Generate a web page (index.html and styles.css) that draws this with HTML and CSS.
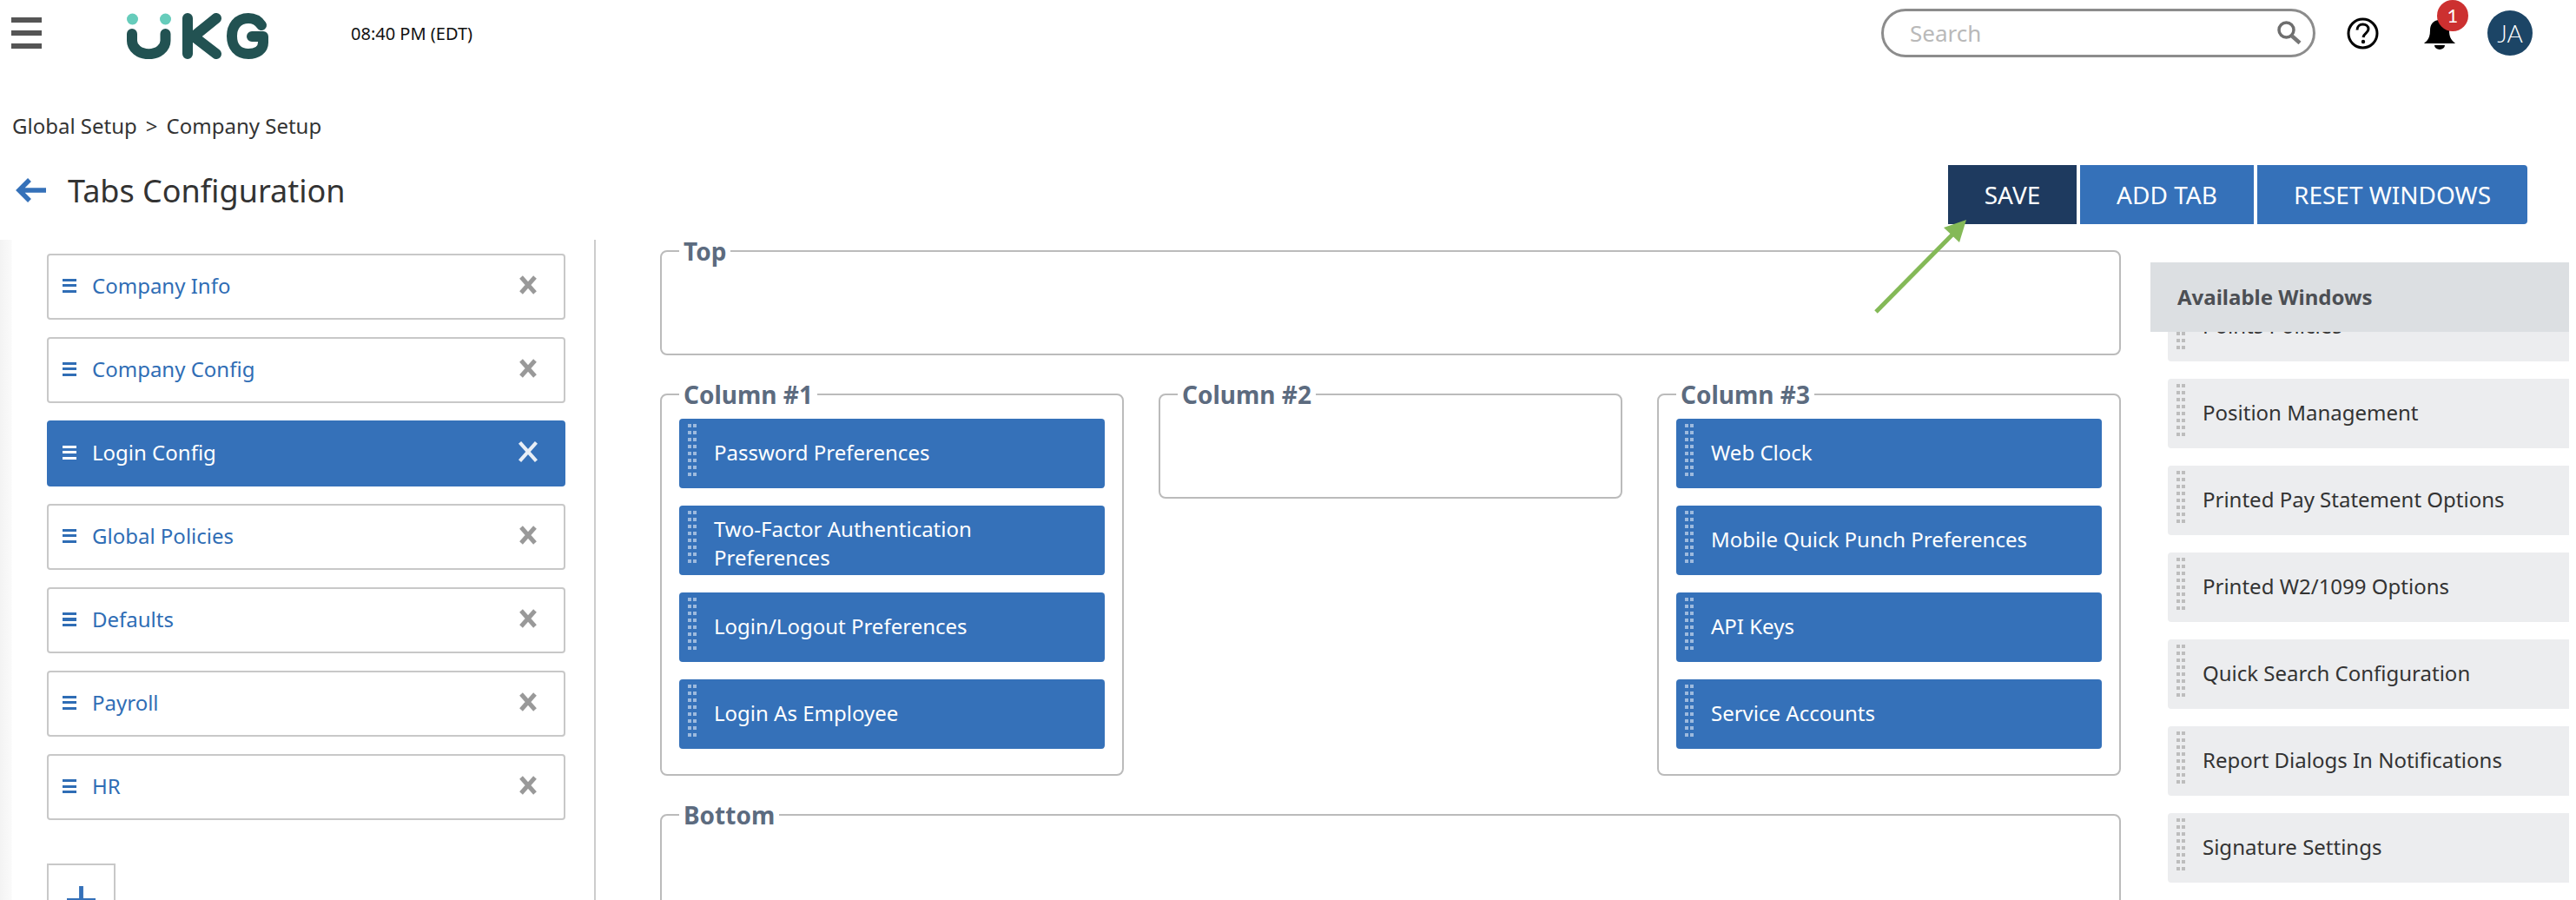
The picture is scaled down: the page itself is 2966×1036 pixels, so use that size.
FILE: index.html
```html
<!DOCTYPE html>
<html lang="en">
<head>
<meta charset="utf-8">
<title>Tabs Configuration</title>
<link rel="stylesheet" href="styles.css">
</head>
<body>
<div class="page">
  <header class="topbar">
    <svg class="menu" viewBox="0 0 35 36" aria-hidden="true"><path d="M0 0h35v6H0zM0 15h35v6H0zM0 30h35v6H0z"/></svg>
    <svg class="logo" viewBox="0 0 164 53" aria-hidden="true">
      <g fill="#66ccbb"><ellipse cx="6.500" cy="7" rx="6.500" ry="6.500"/><ellipse cx="44.500" cy="7" rx="6.500" ry="6.500"/></g>
      <g fill="none" stroke="#225252" stroke-width="12" stroke-linecap="round" stroke-linejoin="round">
        <path d="M6 24v8a19 15 0 0 0 38.500 0v-8"/>
        <path d="M70 6v41M103 6 L77 27 L103 47"/>
        <path d="M155 14c-4-6-10-8-15-8c-13 0-19 10-19 20.500c0 12 7 20.500 19 20.500c10 0 17-5 17-13v-7h-13"/>
      </g>
    </svg>
    <span class="clock">08:40 PM (EDT)</span>
    <div class="search">
      <span class="search-text">Search</span>
      <svg class="search-icon" viewBox="0 0 28 27" aria-hidden="true"><circle cx="10.500" cy="10.500" r="8.500" fill="none" stroke="#6e6e6e" stroke-width="3.500"/><path d="M16.500 17 26 25.500" stroke="#777" stroke-width="4.500"/></svg>
    </div>
    <svg class="help" viewBox="0 0 37 37" aria-hidden="true"><circle cx="18.500" cy="18.500" r="16.500" fill="none" stroke="#000" stroke-width="3"/><path d="M12 14.500c0-4 3-6.500 6.500-6.500c3.500 0 6.500 2 6.500 5.500c0 4.500-5.500 4.500-6 9.500" fill="none" stroke="#000" stroke-width="3"/><circle cx="19" cy="28" r="2.200"/></svg>
    <div class="bell-wrap">
      <svg class="bell" viewBox="0 0 36 34" aria-hidden="true"><path d="M18 0C10 0 7 6 7 12c0 7-2 11-6 14l-1 1h36l-1-1c-4-3-6-7-6-14C29 6 26 0 18 0z"/><path d="M12 29h12a6 5 0 0 1-12 0z"/></svg>
      <span class="badge">1</span>
    </div>
    <span class="avatar">JA</span>
  </header>

  <nav class="crumbs"><span>Global Setup</span><span class="sep">&gt;</span><span>Company Setup</span></nav>

  <div class="titlebar">
    <svg class="back" viewBox="0 0 36 28" aria-hidden="true"><path d="M35 14H5M16 2 4 14l12 12" fill="none" stroke="#3571b9" stroke-width="5.500"/></svg>
    <h1>Tabs Configuration</h1>
    <div class="actions">
      <button class="btn btn-dark">SAVE</button>
      <button class="btn btn-add">ADD TAB</button>
      <button class="btn btn-reset">RESET WINDOWS</button>
    </div>
  </div>

  <main class="workspace">
    <aside class="tabs">
      <div class="tab"><span class="bars"></span><span class="tab-name">Company Info</span><svg class="close" viewBox="0 0 22 22" aria-hidden="true"><path d="M3 2l16 18M19 2 3 20"/></svg></div>
      <div class="tab"><span class="bars"></span><span class="tab-name">Company Config</span><svg class="close" viewBox="0 0 22 22" aria-hidden="true"><path d="M3 2l16 18M19 2 3 20"/></svg></div>
      <div class="tab tab-active"><span class="bars"></span><span class="tab-name">Login Config</span><svg class="close" viewBox="0 0 22 22" aria-hidden="true"><path d="M3 2l16 18M19 2 3 20"/></svg></div>
      <div class="tab"><span class="bars"></span><span class="tab-name">Global Policies</span><svg class="close" viewBox="0 0 22 22" aria-hidden="true"><path d="M3 2l16 18M19 2 3 20"/></svg></div>
      <div class="tab"><span class="bars"></span><span class="tab-name">Defaults</span><svg class="close" viewBox="0 0 22 22" aria-hidden="true"><path d="M3 2l16 18M19 2 3 20"/></svg></div>
      <div class="tab"><span class="bars"></span><span class="tab-name">Payroll</span><svg class="close" viewBox="0 0 22 22" aria-hidden="true"><path d="M3 2l16 18M19 2 3 20"/></svg></div>
      <div class="tab"><span class="bars"></span><span class="tab-name">HR</span><svg class="close" viewBox="0 0 22 22" aria-hidden="true"><path d="M3 2l16 18M19 2 3 20"/></svg></div>
      <div class="add-tab"><svg viewBox="0 0 34 34" aria-hidden="true"><path d="M17 0v34M0 17h34" stroke="#3571b9" stroke-width="5"/></svg></div>
    </aside>

    <section class="layout">
      <fieldset class="zone"><legend>Top</legend></fieldset>
      <div class="columns">
        <fieldset class="zone">
          <legend>Column #1</legend>
          <div class="stack">
            <div class="win"><span class="grip"></span><span>Password Preferences</span></div>
            <div class="win win-two"><span class="grip"></span><span>Two-Factor Authentication Preferences</span></div>
            <div class="win"><span class="grip"></span><span>Login/Logout Preferences</span></div>
            <div class="win"><span class="grip"></span><span>Login As Employee</span></div>
          </div>
        </fieldset>
        <fieldset class="zone"><legend>Column #2</legend></fieldset>
        <fieldset class="zone">
          <legend>Column #3</legend>
          <div class="stack">
            <div class="win"><span class="grip"></span><span>Web Clock</span></div>
            <div class="win"><span class="grip"></span><span>Mobile Quick Punch Preferences</span></div>
            <div class="win"><span class="grip"></span><span>API Keys</span></div>
            <div class="win"><span class="grip"></span><span>Service Accounts</span></div>
          </div>
        </fieldset>
      </div>
      <fieldset class="zone zone-tall"><legend>Bottom</legend></fieldset>
    </section>

    <aside class="available">
      <h2>Available Windows</h2>
      <div class="avail-view">
        <div class="avail-list">
          <div class="win win-free"><span class="grip"></span><span>Points Policies</span></div>
          <div class="win win-free"><span class="grip"></span><span>Position Management</span></div>
          <div class="win win-free"><span class="grip"></span><span>Printed Pay Statement Options</span></div>
          <div class="win win-free"><span class="grip"></span><span>Printed W2/1099 Options</span></div>
          <div class="win win-free"><span class="grip"></span><span>Quick Search Configuration</span></div>
          <div class="win win-free"><span class="grip"></span><span>Report Dialogs In Notifications</span></div>
          <div class="win win-free"><span class="grip"></span><span>Signature Settings</span></div>
        </div>
      </div>
    </aside>
  </main>

  <svg class="pointer" viewBox="0 0 120 120" aria-hidden="true">
    <path d="M2 113 90 24" stroke="#84b957" stroke-width="5" fill="none"/>
    <path d="M106 7 98 33 80 16z" fill="#84b957"/>
  </svg>
</div>
</body>
</html>
```

FILE: styles.css
```css
* { box-sizing: border-box; }
html, body { margin: 0; padding: 0; background: #fff; }
body { font-family: "Noto Sans", "Open Sans", sans-serif; font-size: 24px; color: #333; }
.page { position: relative; width: 2966px; height: 1036px; overflow: hidden; }

.topbar { display: flex; align-items: center; height: 76px; padding: 0 50px 0 13px; }
.menu { flex: none; width: 35px; height: 36px; fill: #555; }
.logo { flex: none; width: 164px; height: 53px; margin-left: 98px; margin-top: 7px; }
.clock { margin-left: 94px; font-size: 20px; color: #111; }
.search { flex: none; display: flex; align-items: center; justify-content: space-between; width: 500px; height: 56px; margin-left: auto; padding: 0 13px 0 30px; border: 3px solid #8c8c8c; border-radius: 28px; }
.search-text { font-size: 26px; color: #b9b9b9; }
.search-icon { width: 28px; height: 27px; margin-top: -1px; }
.help { flex: none; width: 37px; height: 37px; margin-left: 36px; }
.bell-wrap { flex: none; position: relative; width: 36px; height: 34px; margin-left: 52px; margin-top: 4px; }
.bell { display: block; width: 36px; height: 34px; }
.badge { position: absolute; left: 15px; top: -23px; width: 36px; height: 36px; border-radius: 50%; background: #cc3030; color: #fff; font-family: Lato, sans-serif; font-size: 22px; line-height: 36px; text-align: center; }
.avatar { flex: none; width: 52px; height: 52px; margin-left: 37px; border-radius: 50%; background: #1c4566; color: #fff; font-family: Lato, sans-serif; font-size: 28px; font-weight: 300; line-height: 52px; text-align: center; }

.crumbs { display: flex; gap: 10px; padding: 52px 0 0 14px; font-size: 24px; line-height: 33px; color: #333; }
.titlebar { display: flex; align-items: flex-start; height: 110px; padding-top: 29px; padding-left: 18px; }
.back { flex: none; width: 36px; height: 28px; margin-top: 15px; }
.titlebar h1 { margin: 5px 0 0 24px; font-size: 36px; font-weight: 400; line-height: 50px; color: #333; }
.actions { display: flex; gap: 4px; margin-left: auto; margin-right: 56px; }
.btn { height: 68px; border: 0; border-radius: 0; color: #fff; font: 400 28px "Noto Sans", sans-serif; background: #3571b9; }
.btn-dark { width: 148px; background: #1e3a5f; }
.btn-add { width: 200px; }
.btn-reset { width: 311px; border-radius: 0 4px 4px 0; }

.workspace { display: flex; align-items: flex-start; height: 765px; }
.tabs { flex: none; width: 686px; height: 760px; margin-top: 5px; padding: 16px 33px 0 54px; border-right: 2px solid #ccc; background: linear-gradient(90deg, #f3f3f3 0, #fafafa 13px, #fff 14px); display: flex; flex-direction: column; gap: 20px; }
.tab { flex: none; display: flex; align-items: center; height: 76px; padding: 0 30px 0 16px; border: 2px solid #c8c8c8; border-radius: 4px; color: #2f6db5; background: #fff; }
.tab-active { background: #3571b9; border-color: #3571b9; color: #fff; }
.bars { flex: none; width: 16px; height: 16px; margin-top: -3px; background: repeating-linear-gradient(180deg, currentColor 0 3px, transparent 3px 6.500px); }
.tab-name { flex: 1; margin-left: 18px; padding-bottom: 3px; }
.close { flex: none; width: 22px; height: 22px; margin-top: -4px; fill: none; stroke: #999; stroke-width: 5; }
.tab-active .close { stroke: #e8eef6; stroke-width: 3.500; width: 26px; height: 26px; margin-right: -2px; }
.add-tab { flex: none; width: 79px; height: 80px; margin-top: 30px; padding: 24px 0 0 21px; border: 2px solid #c8c8c8; }
.add-tab svg { display: block; width: 33px; height: 33px; }

.layout { flex: none; width: 1682px; margin-left: 74px; display: flex; flex-direction: column; gap: 27px; }
.zone { margin: 0; min-width: 0; min-height: 138px; padding: 10px 20px 29px; border: 2px solid #bbb; border-radius: 8px; }
.zone legend { padding: 0 5px; font-size: 28px; font-weight: 700; line-height: 36px; color: #5c6b7f; }
.zone-tall { min-height: 300px; }
.columns { display: grid; grid-template-columns: repeat(3, 534px); column-gap: 40px; align-items: start; }
.stack { display: flex; flex-direction: column; gap: 20px; }

.win { position: relative; display: flex; align-items: center; height: 80px; padding: 0 60px 3px 40px; border-radius: 4px; background: #3571b9; color: #fff; line-height: 33px; }
.win-two { padding: 6px 60px 0 40px; }
.grip { position: absolute; left: 10px; top: 6px; width: 10px; height: 64px; background: repeating-linear-gradient(180deg, #9dbade 0 4px, transparent 4px 8px); -webkit-mask-image: repeating-linear-gradient(90deg, #000 0 4px, transparent 4px 6px); mask-image: repeating-linear-gradient(90deg, #000 0 4px, transparent 4px 6px); }

.available { flex: none; width: 482px; margin-left: 34px; margin-top: 31px; }
.available h2 { position: relative; z-index: 1; margin: 0; height: 80px; padding-left: 31px; background: #dcdfe2; font-size: 24px; font-weight: 700; line-height: 80px; color: #4c4f54; }
.avail-view { height: 654px; overflow: hidden; padding-left: 20px; }
.avail-list { display: flex; flex-direction: column; gap: 20px; margin-top: -46px; }
.win-free { background: #ecedef; color: #333; border-radius: 4px 0 0 4px; }
.win-free .grip { background: repeating-linear-gradient(180deg, #bdbdbd 0 4px, transparent 4px 8px); }

.pointer { position: absolute; left: 2158px; top: 246px; width: 120px; height: 120px; }
```
